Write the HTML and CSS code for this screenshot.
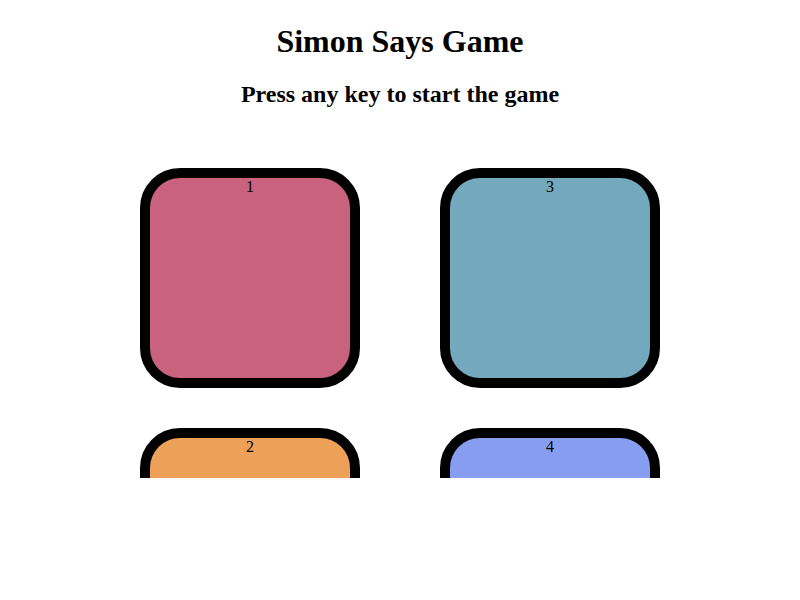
FILE: index.html
```html
<!DOCTYPE html>
<html lang="en">
<head>
    <meta charset="UTF-8">
    <title>Simon Says Game</title>
    <link rel="stylesheet" href="styles.css">
</head>
<body>
<h1>Simon Says Game</h1>
<h2>Press any key to start the game</h2>
<div class="board">
    <div class="btn red" id="red">1</div>
    <div class="btn blue" id="blue">3</div>
    <div class="btn orange" id="orange">2</div>
    <div class="btn purple" id="purple">4</div>
</div>
</body>
</html>
```
FILE: styles.css
```css
body{
    text-align: center;
    font-family: "Liberation Serif", serif;
}
h1{
    margin-top: 15px;
}
.board{
    display: grid;
    grid-template-columns: 220px 220px;
    column-gap: 80px;
    row-gap: 40px;
    justify-content: center;
    padding-top: 40px;
    height: 310px;
    overflow: hidden;
}
.btn{
    width: 200px;
    height: 200px;
    border: 10px solid #000;
    border-radius: 40px;
    font-size: 16px;
}
.red{
    background-color: #c9627e;
}
.blue{
    background-color: #74a9bd;
}
.orange{
    background-color: #eca058;
}
.purple{
    background-color: #879ef0;
}
```
